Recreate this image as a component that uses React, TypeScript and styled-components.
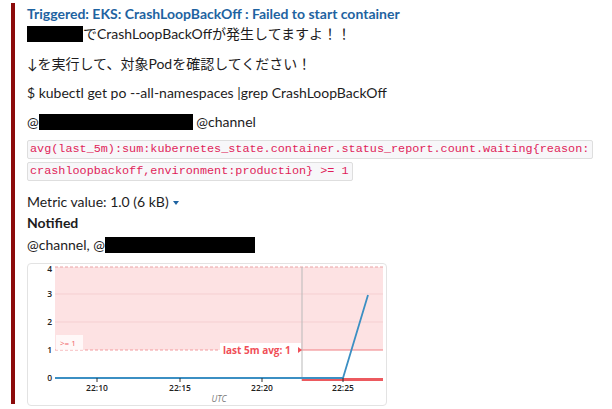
import styled, { createGlobalStyle } from "styled-components";

const GlobalStyle = createGlobalStyle`
	body {
		margin: 0;
		background: #ffffff;
		font-family: Lato, "Noto Sans CJK JP", sans-serif;
		color: #1d1c1d;
	}
`;

const Message = styled.div`
	display: flex;
	padding-top: 3px;
	width: 612px;
	height: 409px;
	box-sizing: border-box;
	overflow: hidden;
`;

const AccentBar = styled.div`
	flex: 0 0 4px;
	height: 401px;
	margin-left: 11px;
	background: #8c0b0b;
`;

const Body = styled.div`
	flex: 1;
	padding-left: 12px;
	min-width: 0;
`;

const Title = styled.div`
	font-size: 14px;
	font-weight: 700;
	line-height: 20px;
	color: #1e63a1;
	margin-top: 1px;
`;

const Line = styled.div<{ $gap?: number }>`
	font-size: 14px;
	line-height: 20px;
	margin-bottom: ${(p) => p.$gap ?? 0}px;
	white-space: nowrap;
`;

const Bold = styled(Line)`
	font-weight: 700;
`;

const Redact = styled.span<{ $w: number }>`
	display: inline-block;
	width: ${(p) => p.$w}px;
	height: 16px;
	background: #000;
	vertical-align: -3px;
`;

const CodeBlock = styled.div`
	margin: 0 0 8px;
	line-height: 0;
`;

const CodeLine = styled.span`
	display: inline-block;
	font-family: "Liberation Mono", "DejaVu Sans Mono", monospace;
	font-size: 11.8px;
	line-height: 17px;
	color: #e01e5a;
	background: #f7f7f9;
	border: 1px solid #dedede;
	border-radius: 2px;
	padding: 0 3px 0 2px;
	white-space: nowrap;
	margin-bottom: 3px;
`;

const Caret = styled.span`
	display: inline-block;
	margin-left: 4px;
	width: 0;
	height: 0;
	border-left: 3.5px solid transparent;
	border-right: 3.5px solid transparent;
	border-top: 4px solid #1e63a1;
	vertical-align: 2px;
`;

const ChartCard = styled.div`
	margin-top: 8px;
	width: 358px;
	height: 141px;
	border: 1px solid #e3e3e3;
	border-radius: 4px;
	background: #fff;
`;

const AxisText = styled.text`
	font-family: "Open Sans", "Noto Sans", sans-serif;
	font-size: 8.5px;
	font-weight: 600;
	fill: #222;
`;

function Chart() {
	const yTicks = [
		{ v: "4", y: 5 },
		{ v: "3", y: 30 },
		{ v: "2", y: 58 },
		{ v: "1", y: 86 },
		{ v: "0", y: 114 },
	];
	const xTicks = [
		{ t: "22:10", x: 69 },
		{ t: "22:15", x: 152 },
		{ t: "22:20", x: 234 },
		{ t: "22:25", x: 315 },
	];
	return (
		<svg width="358" height="141" viewBox="0 0 358 141">
			<rect x="27" y="3" width="328" height="83" fill="#fde2e3" />
			<line x1="27" y1="30" x2="355" y2="30" stroke="#f5cfd1" strokeWidth="1" />
			<line x1="27" y1="58" x2="355" y2="58" stroke="#f5cfd1" strokeWidth="1" />
			<line x1="27" y1="3" x2="355" y2="3" stroke="#eaa3a6" strokeWidth="1" strokeDasharray="3 2" />
			<line x1="27" y1="86" x2="274" y2="86" stroke="#f39a9d" strokeWidth="1" strokeDasharray="3 2" />
			<line x1="274" y1="86" x2="355" y2="86" stroke="#f07f82" strokeWidth="1" />
			<line x1="274" y1="3" x2="274" y2="117" stroke="#b9b9b9" strokeWidth="1" />

			<rect x="28" y="71" width="27" height="15" fill="#ffffff" opacity="0.75" />
			<text x="32" y="82" fontFamily="Open Sans, sans-serif" fontSize="8" fill="#f0646a">
				&gt;= 1
			</text>

			<rect x="192" y="79" width="81" height="14" fill="#ffffff" />
			<text x="195" y="90" fontFamily="Open Sans, sans-serif" fontSize="10" fontWeight="700" fill="#f04e57">
				last 5m avg: 1
			</text>
			<polygon points="270,83 274,86 270,89" fill="#f04e57" />

			<rect x="274" y="114" width="81" height="3" fill="#ec5a5f" />
			<polyline
				points="27,114 315,114 340,31"
				fill="none"
				stroke="#3b8fc3"
				strokeWidth="1.8"
				strokeLinejoin="round"
			/>

			{yTicks.map((t) => (
				<AxisText key={t.v} x="24" y={t.y + 3} textAnchor="end">
					{t.v}
				</AxisText>
			))}
			{xTicks.map((t) => (
				<g key={t.t}>
					<line x1={t.x} y1="114" x2={t.x} y2="118" stroke="#333" strokeWidth="1" />
					<AxisText x={t.x} y="127" textAnchor="middle">
						{t.t}
					</AxisText>
				</g>
			))}
			<text
				x="191"
				y="138"
				textAnchor="middle"
				fontFamily="Open Sans, sans-serif"
				fontSize="8.5"
				fontStyle="italic"
				fill="#777"
			>
				UTC
			</text>
		</svg>
	);
}

export default function App() {
	return (
		<>
			<GlobalStyle />
			<Message>
				<AccentBar />
				<Body>
					<Title>Triggered: EKS: CrashLoopBackOff : Failed to start container</Title>
					<Line $gap={10}>
						<Redact $w={56} />
						でCrashLoopBackOffが発生してますよ！！
					</Line>
					<Line $gap={9}>↓を実行して、対象Podを確認してください！</Line>
					<Line $gap={9}>$ kubectl get po --all-namespaces |grep CrashLoopBackOff</Line>
					<Line $gap={8}>
						@s<Redact $w={154} style={{ marginLeft: -6 }} /> @channel
					</Line>
					<CodeBlock>
						<CodeLine>
							avg(last_5m):sum:kubernetes_state.container.status_report.count.waiting{"{"}reason:
						</CodeLine>
						<br />
						<CodeLine>crashloopbackoff,environment:production{"}"} &gt;= 1</CodeLine>
					</CodeBlock>
					<Line $gap={1}>
						Metric value: 1.0 (6 kB)
						<Caret />
					</Line>
					<Bold $gap={2}>Notified</Bold>
					<Line>
						@channel, @s<Redact $w={150} style={{ marginLeft: -6 }} />
					</Line>
					<ChartCard>
						<Chart />
					</ChartCard>
				</Body>
			</Message>
		</>
	);
}
